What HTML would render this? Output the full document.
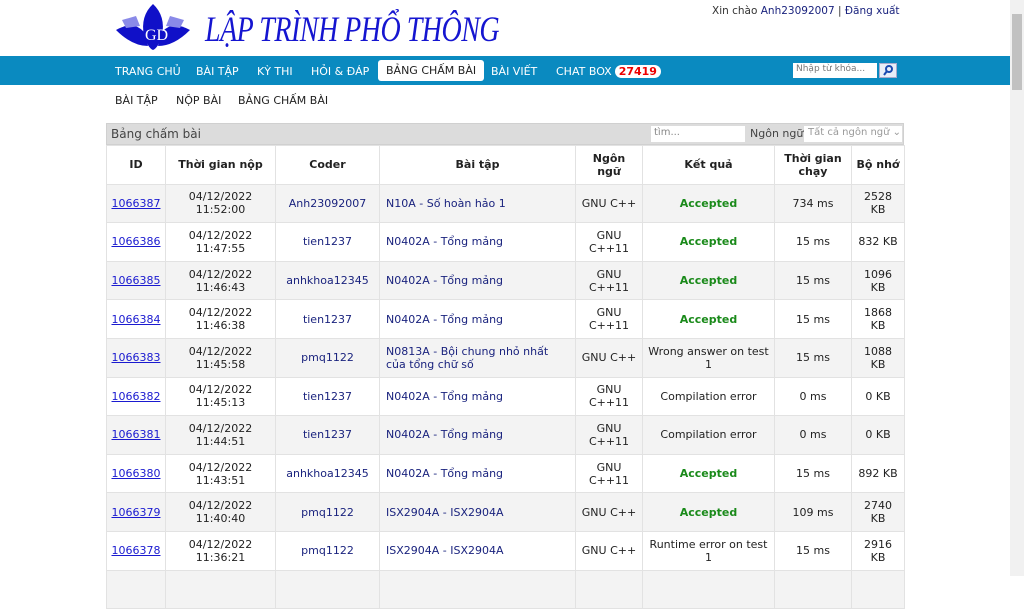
<!DOCTYPE html>
<html><head><meta charset="utf-8"><style>
*{box-sizing:border-box;margin:0;padding:0}
body{width:1024px;height:576px;overflow:hidden;background:#fff;font-family:"DejaVu Sans","Liberation Sans",sans-serif;font-size:11px;color:#222;position:relative}
.top{position:absolute;left:0;top:0;width:1010px;height:56px}
.logo{position:absolute;left:114px;top:2px}
.title{position:absolute;left:205px;top:10px;font-family:"Liberation Serif",serif;font-style:italic;font-size:28px;color:#1515d0;letter-spacing:-0.5px;transform:scaleY(1.3);transform-origin:top left;white-space:nowrap}
.hello{position:absolute;left:712px;top:5px;font-size:10.5px;color:#333;white-space:nowrap}
.hello a{color:#1a237e;text-decoration:none}
.nav{position:absolute;left:0;top:56px;width:1010px;height:29px;background:#0a8ac0}
.nav span{position:absolute;top:9px;color:#fff;font-size:11px;white-space:nowrap}
.nav .act{top:4px;background:#fff;color:#222;padding:4px 8px;border-radius:3px;height:21px}
.nav .badge{position:static;background:#fff;color:#e00;font-weight:bold;border-radius:8px;padding:0 4px;margin-left:3px}
.search{position:absolute;left:793px;top:7px;width:84px;height:15px;background:#fff;font-size:9px;color:#777;padding:1px 3px}
.sbtn{position:absolute;left:879px;top:7px;width:18px;height:15px;background:#e8eef8;border:1px solid #aac}
.sub{position:absolute;top:94px;font-size:11px;color:#222}
.scroll{position:absolute;left:1010px;top:0;width:14px;height:576px;background:#f1f1f1}
.thumb{position:absolute;left:1012px;top:14px;width:10px;height:76px;background:#c1c1c1}
.bar{position:absolute;left:106px;top:123px;width:798px;height:22px;background:#dcdcdc;border:1px solid #d0d0d0}
.bar .t{position:absolute;left:4px;top:3px;font-size:12px;color:#444}
.bar .in{position:absolute;left:544px;top:2px;width:94px;height:16px;background:#fff;font-size:10px;color:#888;padding:1px 3px}
.bar .l{position:absolute;left:643px;top:3px;font-size:11px;color:#444;white-space:nowrap}
.bar .sel{position:absolute;left:697px;top:2px;width:98px;height:16px;background:#fff;font-size:10px;color:#999;padding:1px 4px;white-space:nowrap;overflow:hidden}
table{position:absolute;left:106px;top:145px;width:798px;border-collapse:collapse;table-layout:fixed}
td,th{border:1px solid #e2e2e2;text-align:center;vertical-align:middle;height:38.6px;line-height:13px;font-size:11px;padding:0 4px}
th{font-weight:bold;color:#222}
tr:nth-child(even) td{background:#f3f3f3}
td a{color:#1a1ad0;text-decoration:underline}
.c{color:#1a237e}
.p{text-align:left;color:#1a237e;padding-left:6px}
.ok{color:#1a8a1a;font-weight:bold}
</style></head><body>
<div class="top">
<svg class="logo" width="78" height="50" viewBox="0 0 78 50"><path d="M2 28 Q20 18 30 30 L34 44 Q18 44 2 28Z" fill="#1010c8"/><path d="M76 28 Q58 18 48 30 L44 44 Q60 44 76 28Z" fill="#1010c8"/><path d="M39 2 Q26 14 30 34 Q34 46 39 48 Q44 46 48 34 Q52 14 39 2Z" fill="#1010c8"/><path d="M8 18 L22 14 L26 24 L12 26Z" fill="#8a8ae8"/><path d="M70 18 L56 14 L52 24 L66 26Z" fill="#8a8ae8"/><text x="31" y="38" font-size="16" fill="#fff" font-family="Liberation Serif">GD</text></svg>
<div class="title">LẬP TRÌNH PHỔ THÔNG</div>
<div class="hello">Xin chào <a>Anh23092007</a> | <a>Đăng xuất</a></div>
</div>
<div class="nav">
<span style="left:115px">TRANG CHỦ</span>
<span style="left:196px">BÀI TẬP</span>
<span style="left:257px">KỲ THI</span>
<span style="left:311px">HỎI &amp; ĐÁP</span>
<span class="act" style="left:378px">BẢNG CHẤM BÀI</span>
<span style="left:491px">BÀI VIẾT</span>
<span style="left:556px">CHAT BOX<span class="badge">27419</span></span>
<div class="search">Nhập từ khóa...</div>
<div class="sbtn"><svg width="16" height="13"><circle cx="9" cy="5" r="3" stroke="#1a4ab0" stroke-width="2" fill="none"/><line x1="7" y1="7" x2="4" y2="11" stroke="#1a4ab0" stroke-width="2"/></svg></div>
</div>
<div class="sub" style="left:115px">BÀI TẬP</div>
<div class="sub" style="left:176px">NỘP BÀI</div>
<div class="sub" style="left:238px">BẢNG CHẤM BÀI</div>
<div class="bar"><span class="t">Bảng chấm bài</span><div class="in">tìm...</div><span class="l">Ngôn ngữ</span><div class="sel">Tất cả ngôn ngữ ⌄</div></div>
<table>
<colgroup><col style="width:59px"><col style="width:110px"><col style="width:104px"><col style="width:196px"><col style="width:67px"><col style="width:132px"><col style="width:77px"><col style="width:53px"></colgroup>
<tr><th>ID</th><th>Thời gian nộp</th><th>Coder</th><th>Bài tập</th><th>Ngôn ngữ</th><th>Kết quả</th><th>Thời gian chạy</th><th>Bộ nhớ</th></tr>
<tr><td><a>1066387</a></td><td>04/12/2022<br>11:52:00</td><td class="c">Anh23092007</td><td class="p">N10A - Số hoàn hảo 1</td><td>GNU C++</td><td class="ok">Accepted</td><td>734 ms</td><td>2528 KB</td></tr>
<tr><td><a>1066386</a></td><td>04/12/2022<br>11:47:55</td><td class="c">tien1237</td><td class="p">N0402A - Tổng mảng</td><td>GNU C++11</td><td class="ok">Accepted</td><td>15 ms</td><td>832 KB</td></tr>
<tr><td><a>1066385</a></td><td>04/12/2022<br>11:46:43</td><td class="c">anhkhoa12345</td><td class="p">N0402A - Tổng mảng</td><td>GNU C++11</td><td class="ok">Accepted</td><td>15 ms</td><td>1096 KB</td></tr>
<tr><td><a>1066384</a></td><td>04/12/2022<br>11:46:38</td><td class="c">tien1237</td><td class="p">N0402A - Tổng mảng</td><td>GNU C++11</td><td class="ok">Accepted</td><td>15 ms</td><td>1868 KB</td></tr>
<tr><td><a>1066383</a></td><td>04/12/2022<br>11:45:58</td><td class="c">pmq1122</td><td class="p">N0813A - Bội chung nhỏ nhất của tổng chữ số</td><td>GNU C++</td><td>Wrong answer on test 1</td><td>15 ms</td><td>1088 KB</td></tr>
<tr><td><a>1066382</a></td><td>04/12/2022<br>11:45:13</td><td class="c">tien1237</td><td class="p">N0402A - Tổng mảng</td><td>GNU C++11</td><td>Compilation error</td><td>0 ms</td><td>0 KB</td></tr>
<tr><td><a>1066381</a></td><td>04/12/2022<br>11:44:51</td><td class="c">tien1237</td><td class="p">N0402A - Tổng mảng</td><td>GNU C++11</td><td>Compilation error</td><td>0 ms</td><td>0 KB</td></tr>
<tr><td><a>1066380</a></td><td>04/12/2022<br>11:43:51</td><td class="c">anhkhoa12345</td><td class="p">N0402A - Tổng mảng</td><td>GNU C++11</td><td class="ok">Accepted</td><td>15 ms</td><td>892 KB</td></tr>
<tr><td><a>1066379</a></td><td>04/12/2022<br>11:40:40</td><td class="c">pmq1122</td><td class="p">ISX2904A - ISX2904A</td><td>GNU C++</td><td class="ok">Accepted</td><td>109 ms</td><td>2740 KB</td></tr>
<tr><td><a>1066378</a></td><td>04/12/2022<br>11:36:21</td><td class="c">pmq1122</td><td class="p">ISX2904A - ISX2904A</td><td>GNU C++</td><td>Runtime error on test 1</td><td>15 ms</td><td>2916 KB</td></tr>
<tr><td></td><td></td><td></td><td></td><td></td><td></td><td></td><td></td></tr>
</table>
<div class="scroll"></div><div class="thumb"></div>
</body></html>
